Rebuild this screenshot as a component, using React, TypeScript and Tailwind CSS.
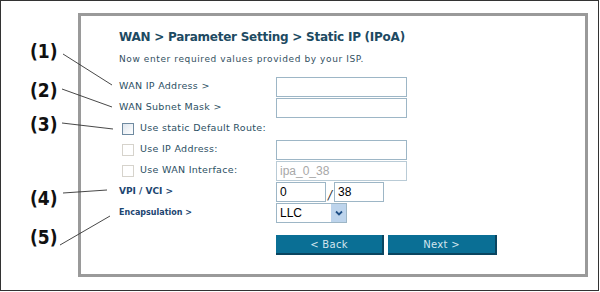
import React from 'react';

const verdana = { fontFamily: '"DejaVu Sans", Verdana, sans-serif' };

type RowProps = {
    label: React.ReactNode;
    children?: React.ReactNode;
};

const Row = ({ label, children }: RowProps) => (
    <div className="flex h-[21px] items-center">
        <div className="w-[157px] shrink-0">{label}</div>
        <div className="flex items-center">{children}</div>
    </div>
);

const TextBox = ({ value, w = 'w-[131px]', muted }: { value?: string; w?: string; muted?: boolean }) => (
    <div
        className={`${w} h-[20px] border ${muted ? 'border-[#b9cbd6] text-[#a8a8a8]' : 'border-[#9db6c6] text-black'} bg-white px-[3px] text-[12px] leading-[18px] tracking-normal`}
        style={{ fontFamily: '"Liberation Sans", Arial, sans-serif' }}
    >
        {value}
    </div>
);

const Check = ({ label, active }: { label: string; active?: boolean }) => (
    <div className="flex items-center pl-[3px]">
        <div
            className={`h-[12px] w-[12px] border ${active ? 'border-[#6f8aa0] bg-gradient-to-br from-[#dfe6ee] to-white' : 'border-[#d6d3cc] bg-white'}`}
        />
        <span className="ml-[6px]">{label}</span>
    </div>
);

const Callout = ({ n, mt }: { n: number; mt: string }) => (
    <div
        className={`${mt} h-[18px] text-[19px] font-bold leading-[18px] text-[#111]`}
        style={{ fontFamily: '"DejaVu Sans Condensed", "DejaVu Sans", sans-serif', fontStretch: 'condensed' }}
    >
        ({n})
    </div>
);

export default function App() {
    return (
        <div className="relative h-[291px] w-[599px] border border-[#333] bg-white" style={verdana}>
            <div className="flex">
                {/* callout numbers */}
                <div className="flex w-[77px] shrink-0 flex-col pl-[29px]">
                    <Callout n={1} mt="mt-[41px]" />
                    <Callout n={2} mt="mt-[21px]" />
                    <Callout n={3} mt="mt-[16px]" />
                    <Callout n={4} mt="mt-[56px]" />
                    <Callout n={5} mt="mt-[21px]" />
                </div>

                {/* router page */}
                <div className="mt-[12px] h-[264px] w-[510px] border-[3px] border-[#9a9a9a] pl-[38px] pt-[13px]">
                    <div className="h-[16px] text-[12px] font-bold leading-[16px] tracking-[-0.25px] text-[#1d4a62]">
                        WAN &gt; Parameter Setting &gt; Static IP (IPoA)
                    </div>
                    <div className="mt-[8px] h-[12px] text-[9px] leading-[12px] tracking-[0.6px] text-[#33505f]">
                        Now enter required values provided by your ISP.
                    </div>

                    <div className="mt-[11px] flex flex-col text-[9.5px] tracking-[0.3px] text-[#2c4f63]">
                        <Row label="WAN IP Address >">
                            <TextBox />
                        </Row>
                        <Row label="WAN Subnet Mask >">
                            <TextBox />
                        </Row>
                        <Row label={<Check label="Use static Default Route:" active />} />
                        <Row label={<Check label="Use IP Address:" />}>
                            <TextBox />
                        </Row>
                        <Row label={<Check label="Use WAN Interface:" />}>
                            <TextBox value="ipa_0_38" muted />
                        </Row>
                        <Row label={<span className="text-[9px] font-bold tracking-[0px] text-[#1c4570]">VPI / VCI &gt;</span>}>
                            <TextBox value="0" w="w-[50px]" />
                            <span className="mx-[2px] mt-[6px] w-[4px] text-[12px] italic text-[#333]">/</span>
                            <TextBox value="38" w="w-[50px]" />
                        </Row>
                        <Row label={<span className="text-[8px] font-bold tracking-[0px] text-[#1c4570]">Encapsulation &gt;</span>}>
                            <div
                                className="flex h-[20px] w-[71px] border border-[#9db6c6] bg-white text-[12px] leading-[18px] tracking-normal text-black"
                                style={{ fontFamily: '"Liberation Sans", Arial, sans-serif' }}
                            >
                                <span className="flex-1 pl-[3px]">LLC</span>
                                <span className="flex w-[15px] items-center justify-center bg-[#bdd4ec]">
                                    <svg width="8" height="6" viewBox="0 0 8 6">
                                        <path d="M1 1.5 L4 4.5 L7 1.5" stroke="#1f4f86" strokeWidth="1.8" fill="none" />
                                    </svg>
                                </span>
                            </div>
                        </Row>
                    </div>

                    <div className="ml-[157px] mt-[12px] flex gap-[4px]">
                        <button className="h-[20px] w-[108px] border-b-2 border-r-2 border-[#0a4560] bg-[#0a6f95] text-[10px] tracking-[0.3px] text-[#d3e6ef]">
                            &lt; Back
                        </button>
                        <button className="h-[20px] w-[109px] border-b-2 border-r-2 border-[#0a4560] bg-[#0a6f95] text-[10px] tracking-[0.3px] text-[#d3e6ef]">
                            Next &gt;
                        </button>
                    </div>
                </div>
            </div>

            {/* callout leader lines */}
            <svg className="pointer-events-none absolute left-[-1px] top-[-1px]" width="600" height="292">
                <g stroke="#333" strokeWidth="0.9" fill="none">
                    <line x1="63" y1="54" x2="112" y2="85" />
                    <line x1="62" y1="89" x2="112" y2="107" />
                    <line x1="62" y1="123" x2="113" y2="129" />
                    <line x1="63" y1="193" x2="107" y2="190" />
                    <line x1="60" y1="245" x2="110" y2="216" />
                </g>
            </svg>
        </div>
    );
}
